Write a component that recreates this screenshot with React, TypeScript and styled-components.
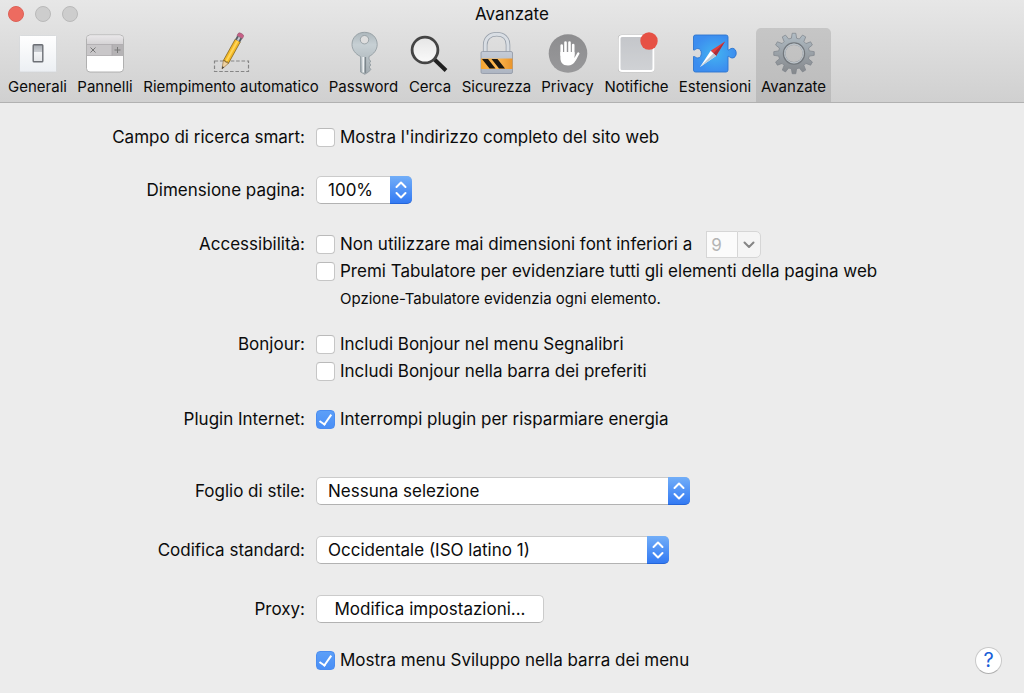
import React from "react";
import styled, { createGlobalStyle, css } from "styled-components";

const GlobalStyle = createGlobalStyle`
  *, *::before, *::after { box-sizing: border-box; }
  html, body { margin: 0; background: #ececec; }
  body, button, input, select {
    font-family: Inter, "Liberation Sans", sans-serif;
    font-size: 17px;
    color: #0b0b0b;
  }
`;

/* ---------- window frame ---------- */

const Window = styled.div`
  display: flex;
  flex-direction: column;
  min-height: 100vh;
  background: #ececec;
`;

const Header = styled.header`
  background: linear-gradient(#e7e7e7, #d0d0d0);
  border-bottom: 1px solid #b1b1b1;
`;

const TitleBar = styled.div`
  display: grid;
  grid-template-columns: 1fr auto 1fr;
  align-items: center;
  height: 28px;
  padding: 0 8px;
`;

const Lights = styled.div`
  display: flex;
  gap: 11px;
`;

const Light = styled.button<{ $close?: boolean }>`
  width: 16px;
  height: 16px;
  padding: 0;
  border-radius: 50%;
  border: 1px solid ${(p) => (p.$close ? "#dd6157" : "#b9b9b9")};
  background: ${(p) => (p.$close ? "#ed6b60" : "#cdcdcd")};
`;

const Title = styled.h1`
  margin: 0;
  font-size: 17px;
  line-height: 20px;
  font-weight: 400;
`;

const Toolbar = styled.nav`
  display: flex;
  padding-left: 3px;
`;

const Tab = styled.button<{ $width: number; $active?: boolean }>`
  display: flex;
  flex-direction: column;
  align-items: center;
  gap: 2px;
  width: ${(p) => p.$width}px;
  height: 74px;
  padding: 3px 0 0;
  border: 0;
  border-radius: 5px 5px 0 0;
  background: ${(p) => (p.$active ? "linear-gradient(#c6c6c6, #bbbbbb)" : "none")};
  font-size: 15px;
  line-height: 20px;
  white-space: nowrap;

  svg {
    display: block;
    flex: none;
  }
`;

/* ---------- form ---------- */

const Form = styled.form`
  flex: 1;
  padding: 21px 22px 16px 0;
`;

const Row = styled.div<{ $gap?: number }>`
  display: grid;
  grid-template-columns: minmax(0, 305px) 1fr;
  column-gap: 11px;
  margin-top: ${(p) => p.$gap ?? 0}px;
`;

/* The popup and button rows are one pixel taller than the tick-box lines. */
const RowLabel = styled.label<{ $field?: boolean }>`
  padding-top: ${(p) => (p.$field ? 1 : 0)}px;
  text-align: right;
  line-height: 27px;
`;

const Stack = styled.div`
  display: flex;
  flex-direction: column;
  align-items: flex-start;
`;

const Line = styled.div`
  display: flex;
  align-items: center;
  width: 100%;
`;

const Check = styled.label`
  display: flex;
  align-items: center;
  gap: 5px;
  line-height: 27px;
`;

const Box = styled.input`
  appearance: none;
  flex: none;
  display: grid;
  place-items: center;
  width: 19px;
  height: 19px;
  margin: 0;
  border: 1px solid #c6c6c6;
  border-top-color: #bababa;
  border-radius: 4px;
  background: #fff;

  &:checked {
    border-color: #4b8df0;
    background: linear-gradient(#5c9ff8, #4a8ff6);
  }

  &:checked::after {
    content: "";
    width: 7px;
    height: 13px;
    margin-bottom: 3px;
    border: solid #fff;
    border-width: 0 2px 2px 0;
    transform: rotate(35deg);
  }
`;

const Note = styled.p`
  margin: 0;
  padding-left: 24px;
  font-size: 15px;
  line-height: 27px;
`;

const field = css`
  height: 28px;
  border: 1px solid #cbcbcb;
  border-bottom-color: #b2b2b2;
  border-radius: 5px;
  background: #fff;
`;

const PopupWrap = styled.div<{ $width: number }>`
  position: relative;
  width: ${(p) => p.$width}px;
  max-width: 100%;
`;

const PopupSelect = styled.select`
  ${field}
  appearance: none;
  display: block;
  width: 100%;
  padding: 0 24px 0 11px;
`;

const PopupCap = styled.span`
  position: absolute;
  inset: 0 0 0 auto;
  display: grid;
  place-items: center;
  width: 22px;
  border-radius: 0 5px 5px 0;
  border-bottom: 1px solid #2465d8;
  background: linear-gradient(#72aef8, #337af3);
  pointer-events: none;
`;

const Combo = styled.span`
  display: flex;
  margin-left: 14px;
`;

const ComboInput = styled.input`
  width: 31px;
  height: 27px;
  padding: 0 4px;
  border: 1px solid #d6d6d6;
  border-right: 0;
  background: #fbfbfb;
  color: #b4b4b4;
`;

const ComboButton = styled.button`
  display: grid;
  place-items: center;
  width: 24px;
  height: 27px;
  padding: 0;
  border: 1px solid #d6d6d6;
  border-radius: 0 5px 5px 0;
  background: #f5f5f5;
`;

const PushButton = styled.button`
  ${field}
  width: 228px;
  padding: 0;
  white-space: nowrap;
`;

const HelpButton = styled.button`
  width: 27px;
  height: 27px;
  margin-left: auto;
  padding: 0;
  border: 1px solid #c9c9c9;
  border-bottom-color: #b0b0b0;
  border-radius: 50%;
  background: #fff;
  color: #1a5fd8;
  font-size: 20px;
  line-height: 25px;
`;

/* ---------- icons ---------- */

const Icon = ({ children }: { children: React.ReactNode }) => (
  <svg width="44" height="44" viewBox="0 0 44 44" fill="none" aria-hidden="true">
    {children}
  </svg>
);

const GeneralIcon = () => (
  <Icon>
    <defs>
      <linearGradient id="gen" x2="0" y2="1">
        <stop stopColor="#ffffff" />
        <stop offset="1" stopColor="#eceff3" />
      </linearGradient>
      <linearGradient id="genSwitch" x2="0" y2="1">
        <stop stopColor="#a9adb3" />
        <stop offset=".4" stopColor="#c9ccd1" />
        <stop offset=".42" stopColor="#f4f5f7" />
        <stop offset="1" stopColor="#e4e6e9" />
      </linearGradient>
    </defs>
    <rect x="3.5" y="4.5" width="37" height="36.5" rx="1" fill="url(#gen)" stroke="#d3d5d8" strokeWidth=".8" />
    <rect x="17.2" y="13.7" width="9.6" height="17" rx=".8" fill="url(#genSwitch)" stroke="#6c6f75" strokeWidth="1.4" />
  </Icon>
);

const TabsIcon = () => (
  <Icon>
    <defs>
      <linearGradient id="tabsTop" x2="0" y2="1">
        <stop stopColor="#e9e7e9" />
        <stop offset="1" stopColor="#d4d2d4" />
      </linearGradient>
    </defs>
    <rect x="3.5" y="4" width="37" height="37" rx="3.5" fill="#fff" stroke="#a9a9a9" strokeWidth=".9" />
    <path d="M4 13.5V7.5Q4 4.5 7 4.5H37Q40 4.5 40 7.5V13.5Z" fill="url(#tabsTop)" />
    <path d="M4 13.5H29V24.5H4Z" fill="#c9c7c9" />
    <path d="M29 13.5H40V24.5H29Z" fill="#b5b3b5" />
    <path d="M4 13.5H40M4 24.5H40M29 13.5V24.5" stroke="#a3a1a3" strokeWidth=".7" />
    <path d="M7.5 16.5L12.5 21.5M12.5 16.5L7.5 21.5M31.5 19H37.5M34.5 16V22" stroke="#777" strokeWidth="1" />
  </Icon>
);

const PencilIcon = () => (
  <Icon>
    <rect x="5.5" y="30" width="34" height="10.5" stroke="#858585" strokeWidth="1.2" strokeDasharray="3.6 1.8" />
    <g transform="translate(13 38) rotate(29)">
      <path d="M0 0L-2.9 -8H2.9Z" fill="#efd2a2" stroke="#96733f" strokeWidth=".6" />
      <path d="M0 0L-1 -2.6H1Z" fill="#333" />
      <path d="M-2.9 -8V-32.5H2.9V-8L1.4 -9L0 -8L-1.4 -9Z" fill="#f4b925" stroke="#7f6120" strokeWidth=".7" />
      <path d="M-1 -9V-32.5H1V-9Z" fill="#ffd65a" />
      <path d="M-2.9 -32.5H2.9V-36.5H-2.9Z" fill="#565c64" />
      <path d="M-1 -32.5H1V-36.5H-1Z" fill="#c3c8cd" />
      <path d="M-3.1 -36.5H3.1V-38.8Q3.1 -40.5 0 -40.5Q-3.1 -40.5 -3.1 -38.8Z" fill="#c75f86" stroke="#8d5368" strokeWidth=".5" />
    </g>
  </Icon>
);

const KeyIcon = () => (
  <Icon>
    <defs>
      <linearGradient id="key" x2="0" y2="1">
        <stop stopColor="#adb7bc" />
        <stop offset=".3" stopColor="#c7d0d4" />
        <stop offset="1" stopColor="#a2abb0" />
      </linearGradient>
    </defs>
    <path
      fillRule="evenodd"
      d="M22.5 1.3C30 1.3 35.2 6.5 35.2 13.5C35.2 18.5 32 23 27 25.5V28.5L28.8 30L27.5 32L28.8 34L27.2 36L28.8 38.5L26.5 41L22.8 43.3L18.5 41V25.5C13.3 23 10 18.5 10 13.5C10 6.5 15.3 1.3 22.5 1.3ZM22.5 4.5A4.2 4.2 0 1 0 22.5 12.9A4.2 4.2 0 1 0 22.5 4.5Z"
      fill="url(#key)"
      stroke="#8d979c"
      strokeWidth=".8"
    />
    <path d="M21.2 26V41.5" stroke="#eef1f2" strokeWidth="1.6" />
    <path d="M23.5 26V42" stroke="#7d868b" strokeWidth="1.2" />
  </Icon>
);

const SearchIcon = () => (
  <Icon>
    <defs>
      <linearGradient id="glass" x2="0" y2="1">
        <stop stopColor="#e5e5e5" />
        <stop offset="1" stopColor="#fafafa" />
      </linearGradient>
    </defs>
    <path d="M26.5 28.5L38 39.5" stroke="#202020" strokeWidth="4" />
    <circle cx="17" cy="19" r="12.9" fill="url(#glass)" stroke="#444" strokeWidth="2.8" />
  </Icon>
);

const LockIcon = () => (
  <Icon>
    <defs>
      <linearGradient id="lockBody" x2="0" y2="1">
        <stop stopColor="#c5ccd7" />
        <stop offset="1" stopColor="#adb5c2" />
      </linearGradient>
      <linearGradient id="lockBand" x2="1" y2="0">
        <stop stopColor="#f3a534" />
        <stop offset=".5" stopColor="#ffb952" />
        <stop offset="1" stopColor="#e9942a" />
      </linearGradient>
    </defs>
    <path d="M10.2 22V14C10.2 7 15 3.3 21.7 3.3C28.4 3.3 33 7 33 14V22" stroke="#98a0aa" strokeWidth="4.6" />
    <path d="M10.2 22V14C10.2 7 15 3.3 21.7 3.3C28.4 3.3 33 7 33 14V22" stroke="#d9dee4" strokeWidth="3" />
    <rect x="6" y="20.5" width="31.5" height="22" rx="1.5" fill="url(#lockBody)" stroke="#8f97a5" strokeWidth=".8" />
    <rect x="6" y="27.5" width="31.5" height="10.5" fill="url(#lockBand)" />
    <path d="M7 28H13L20.5 37.5H14.5ZM16.5 28H22.5L30 37.5H24Z" fill="#1c1710" />
  </Icon>
);

const HandIcon = () => (
  <Icon>
    <defs>
      <linearGradient id="hand" x2="0" y2="1">
        <stop stopColor="#8d8d8f" />
        <stop offset="1" stopColor="#98989a" />
      </linearGradient>
    </defs>
    <circle cx="22" cy="22.5" r="19.3" fill="url(#hand)" />
    <g stroke="#fff" strokeLinecap="round">
      <path d="M15.7 24V14.5M19.5 22V11.5M23.5 22V11.5M27.2 24V14" strokeWidth="2.6" />
      <path d="M29 28.5L32.3 22.5" strokeWidth="2.4" />
    </g>
    <path d="M14.4 21H28.5V27L31 24.5C30 29 28.5 34.5 22 34.5C16.5 34.5 14.4 31 14.4 27Z" fill="#fff" />
  </Icon>
);

const NotifyIcon = () => (
  <Icon>
    <defs>
      <linearGradient id="note" x2="0" y2="1">
        <stop stopColor="#c4c6ca" />
        <stop offset="1" stopColor="#d0d2d5" />
      </linearGradient>
    </defs>
    <rect x="3" y="3.8" width="36.5" height="37.5" rx="3.5" fill="#b4b4b4" />
    <rect x="4.5" y="5" width="34" height="35" rx="2.5" fill="url(#note)" stroke="#fff" strokeWidth="2" />
    <circle cx="34" cy="10" r="8.7" fill="#e65145" />
  </Icon>
);

const ExtensionIcon = () => (
  <Icon>
    <defs>
      <radialGradient id="ext">
        <stop stopColor="#43b4f1" />
        <stop offset="1" stopColor="#3c8def" />
      </radialGradient>
    </defs>
    <path
      d="M2.5 4H33Q35 4 35 6V19C36.5 19.5 36.8 17.3 39.3 17.3C44.5 17.3 44.5 27 39.3 27C36.8 27 36.5 25 35 25.3V39Q35 41 33 41H2.5Q.5 41 .5 39V25.5C2 25 2.5 27 4.8 27C9.5 27 9.5 17.5 4.8 17.5C2.5 17.5 2 19.5 .5 19V6Q.5 4 2.5 4Z"
      fill="url(#ext)"
      stroke="#2e75ce"
      strokeWidth=".9"
    />
    <path d="M32 10.5L17.7 19.8L23 25Z" fill="#e23e3c" />
    <path d="M32 10.5L20.3 22.5L23 25Z" fill="#a82f3b" />
    <path d="M7 36L17.7 19.8L23 25Z" fill="#fff" />
    <path d="M7 36L20.3 22.5L23 25Z" fill="#bcc9d4" />
  </Icon>
);

const gearPath = (() => {
  const teeth = 12;
  const at = (r: number, a: number) => `${(22 + r * Math.sin(a)).toFixed(2)} ${(22.5 - r * Math.cos(a)).toFixed(2)}`;
  const points: string[] = [];
  for (let i = 0; i < teeth; i++) {
    const a = (i * 2 * Math.PI) / teeth;
    points.push(at(15.5, a - 0.17), at(20.3, a - 0.09), at(20.3, a + 0.09), at(15.5, a + 0.17));
  }
  return `M${points.join("L")}ZM22 13.5A9 9 0 1 0 22 31.5A9 9 0 1 0 22 13.5Z`;
})();

const GearIcon = () => (
  <Icon>
    <defs>
      <linearGradient id="gear" x2="0" y2="1">
        <stop stopColor="#b1bdc5" />
        <stop offset=".5" stopColor="#9aa1a7" />
        <stop offset="1" stopColor="#85888c" />
      </linearGradient>
    </defs>
    <path fillRule="evenodd" d={gearPath} fill="url(#gear)" stroke="#7d8389" strokeWidth=".7" strokeLinejoin="round" />
    <circle cx="22" cy="22.5" r="10.6" stroke="#72777c" strokeWidth="1.2" />
    <circle cx="22" cy="22.5" r="9.3" stroke="#bcc3c9" strokeWidth="1.2" />
  </Icon>
);

const Chevrons = () => (
  <svg width="12" height="18" viewBox="0 0 12 18" fill="none" stroke="#fff" strokeWidth="2" strokeLinecap="round" strokeLinejoin="round" aria-hidden="true">
    <path d="M1.5 6L6 1.5L10.5 6M1.5 12L6 16.5L10.5 12" />
  </svg>
);

/* ---------- data and composed controls ---------- */

const tabs = [
  { label: "Generali", width: 69, icon: <GeneralIcon /> },
  { label: "Pannelli", width: 66, icon: <TabsIcon /> },
  { label: "Riempimento automatico", width: 186, icon: <PencilIcon /> },
  { label: "Password", width: 79, icon: <KeyIcon /> },
  { label: "Cerca", width: 54, icon: <SearchIcon /> },
  { label: "Sicurezza", width: 79, icon: <LockIcon /> },
  { label: "Privacy", width: 63, icon: <HandIcon /> },
  { label: "Notifiche", width: 75, icon: <NotifyIcon /> },
  { label: "Estensioni", width: 82, icon: <ExtensionIcon /> },
  { label: "Avanzate", width: 75, icon: <GearIcon />, active: true },
];

const Checkbox = ({ id, label, checked }: { id: string; label: string; checked?: boolean }) => (
  <Check>
    <Box type="checkbox" id={id} defaultChecked={checked} />
    {label}
  </Check>
);

const Popup = ({ id, value, width }: { id: string; value: string; width: number }) => (
  <PopupWrap $width={width}>
    <PopupSelect id={id} defaultValue={value}>
      <option>{value}</option>
    </PopupSelect>
    <PopupCap>
      <Chevrons />
    </PopupCap>
  </PopupWrap>
);

export default function App() {
  return (
    <Window>
      <GlobalStyle />
      <Header>
        <TitleBar>
          <Lights>
            <Light $close aria-label="Chiudi" />
            <Light aria-label="Riduci" />
            <Light aria-label="Ingrandisci" />
          </Lights>
          <Title>Avanzate</Title>
        </TitleBar>
        <Toolbar>
          {tabs.map((tab) => (
            <Tab key={tab.label} type="button" $width={tab.width} $active={tab.active}>
              {tab.icon}
              {tab.label}
            </Tab>
          ))}
        </Toolbar>
      </Header>

      <Form onSubmit={(e) => e.preventDefault()}>
        <Row>
          <RowLabel htmlFor="address">Campo di ricerca smart:</RowLabel>
          <Checkbox id="address" label="Mostra l'indirizzo completo del sito web" />
        </Row>
        <Row $gap={25}>
          <RowLabel $field htmlFor="zoom">Dimensione pagina:</RowLabel>
          <Popup id="zoom" value="100%" width={96} />
        </Row>
        <Row $gap={27}>
          <RowLabel htmlFor="minfont">Accessibilità:</RowLabel>
          <Stack>
            <Line>
              <Checkbox id="minfont" label="Non utilizzare mai dimensioni font inferiori a" />
              <Combo>
                <ComboInput aria-label="Dimensione minima" defaultValue="9" disabled />
                <ComboButton type="button" aria-label="Scegli dimensione" disabled>
                  <svg width="12" height="8" viewBox="0 0 12 8" fill="none" stroke="#858585" strokeWidth="2" strokeLinecap="round" strokeLinejoin="round" aria-hidden="true">
                    <path d="M1.5 1.5L6 6L10.5 1.5" />
                  </svg>
                </ComboButton>
              </Combo>
            </Line>
            <Checkbox id="tabkey" label="Premi Tabulatore per evidenziare tutti gli elementi della pagina web" />
            <Note>Opzione-Tabulatore evidenzia ogni elemento.</Note>
          </Stack>
        </Row>
        <Row $gap={19}>
          <RowLabel htmlFor="bonjourMenu">Bonjour:</RowLabel>
          <Stack>
            <Checkbox id="bonjourMenu" label="Includi Bonjour nel menu Segnalibri" />
            <Checkbox id="bonjourBar" label="Includi Bonjour nella barra dei preferiti" />
          </Stack>
        </Row>
        <Row $gap={21}>
          <RowLabel htmlFor="plugin">Plugin Internet:</RowLabel>
          <Checkbox id="plugin" label="Interrompi plugin per risparmiare energia" checked />
        </Row>
        <Row $gap={44}>
          <RowLabel $field htmlFor="style">Foglio di stile:</RowLabel>
          <Popup id="style" value="Nessuna selezione" width={374} />
        </Row>
        <Row $gap={31}>
          <RowLabel $field htmlFor="encoding">Codifica standard:</RowLabel>
          <Popup id="encoding" value="Occidentale (ISO latino 1)" width={353} />
        </Row>
        <Row $gap={31}>
          <RowLabel $field htmlFor="proxy">Proxy:</RowLabel>
          <PushButton id="proxy" type="button">
            Modifica impostazioni...
          </PushButton>
        </Row>
        <Row $gap={24}>
          <span />
          <Line>
            <Checkbox id="develop" label="Mostra menu Sviluppo nella barra dei menu" checked />
            <HelpButton type="button" aria-label="Aiuto">
              ?
            </HelpButton>
          </Line>
        </Row>
      </Form>
    </Window>
  );
}
